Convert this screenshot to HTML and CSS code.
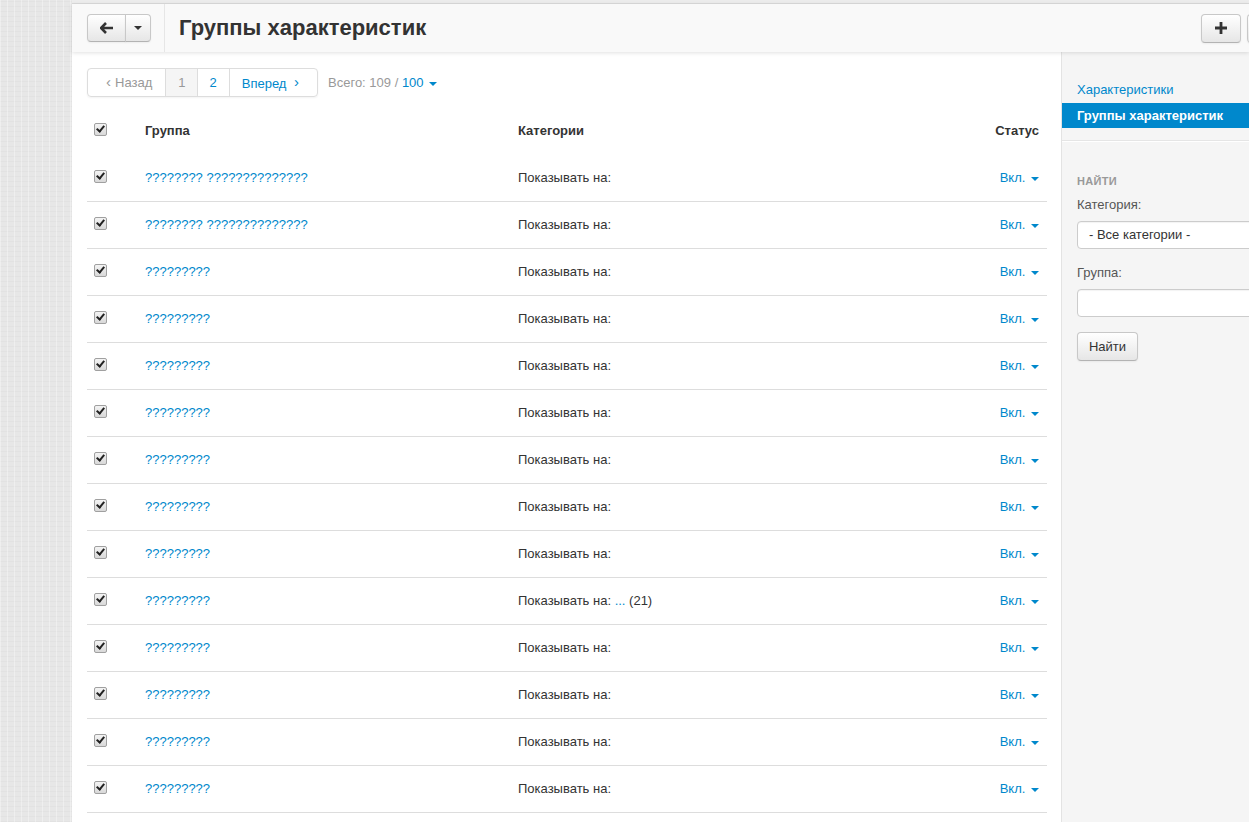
FILE: index.html
```html
<!DOCTYPE html>
<html>
	<head>
		<meta charset="utf-8">
		<title>Группы характеристик</title>
		<link rel="stylesheet" href="styles.css">
	</head>
	<body>
		<div class="desk"></div>
		<div class="page">
			<div class="tabs"></div>
			<div class="header">
				<div class="btn-group">
					<button class="btn btn-back"><svg width="14" height="12" viewBox="0 0 14 12"><path d="M6 1 L1 6 L6 11 M1.5 6 H13" fill="none" stroke="#333" stroke-width="2.6" stroke-linejoin="miter"/></svg></button>
					<button class="btn btn-caret"><span class="caret dark"></span></button>
				</div>
				<div class="sep"></div>
				<h1>Группы характеристик</h1>
				<div class="header-right">
					<button class="btn btn-add"><svg width="12" height="12" viewBox="0 0 12 12"><path d="M6 0 V12 M0 6 H12" stroke="#333" stroke-width="2.8"/></svg></button>
					<button class="btn btn-more"></button>
				</div>
			</div>
			<div class="body">
				<div class="content">
					<div class="toolbar">
						<ul class="pager">
							<li class="disabled"><span class="chev">&lsaquo;</span> Назад</li>
							<li class="active">1</li>
							<li><a href="#">2</a></li>
							<li><a href="#">Вперед <span class="chev">&rsaquo;</span></a></li>
						</ul>
						<div class="total">Всего: 109 / <a href="#">100 <span class="caret"></span></a></div>
					</div>
					<table class="list">
						<thead>
							<tr>
								<th class="c-check"><span class="cb"></span></th>
								<th class="c-name">Группа</th>
								<th class="c-cat">Категории</th>
								<th class="c-status">Статус</th>
							</tr>
						</thead>
						<tbody>
							<tr><td class="c-check"><span class="cb"></span></td><td><a href="#">???????? ??????????????</a></td><td>Показывать на:</td><td class="c-status"><a href="#">Вкл. <span class="caret"></span></a></td></tr>
							<tr><td class="c-check"><span class="cb"></span></td><td><a href="#">???????? ??????????????</a></td><td>Показывать на:</td><td class="c-status"><a href="#">Вкл. <span class="caret"></span></a></td></tr>
							<tr><td class="c-check"><span class="cb"></span></td><td><a href="#">?????????</a></td><td>Показывать на:</td><td class="c-status"><a href="#">Вкл. <span class="caret"></span></a></td></tr>
							<tr><td class="c-check"><span class="cb"></span></td><td><a href="#">?????????</a></td><td>Показывать на:</td><td class="c-status"><a href="#">Вкл. <span class="caret"></span></a></td></tr>
							<tr><td class="c-check"><span class="cb"></span></td><td><a href="#">?????????</a></td><td>Показывать на:</td><td class="c-status"><a href="#">Вкл. <span class="caret"></span></a></td></tr>
							<tr><td class="c-check"><span class="cb"></span></td><td><a href="#">?????????</a></td><td>Показывать на:</td><td class="c-status"><a href="#">Вкл. <span class="caret"></span></a></td></tr>
							<tr><td class="c-check"><span class="cb"></span></td><td><a href="#">?????????</a></td><td>Показывать на:</td><td class="c-status"><a href="#">Вкл. <span class="caret"></span></a></td></tr>
							<tr><td class="c-check"><span class="cb"></span></td><td><a href="#">?????????</a></td><td>Показывать на:</td><td class="c-status"><a href="#">Вкл. <span class="caret"></span></a></td></tr>
							<tr><td class="c-check"><span class="cb"></span></td><td><a href="#">?????????</a></td><td>Показывать на:</td><td class="c-status"><a href="#">Вкл. <span class="caret"></span></a></td></tr>
							<tr><td class="c-check"><span class="cb"></span></td><td><a href="#">?????????</a></td><td>Показывать на: <a href="#">...</a> (21)</td><td class="c-status"><a href="#">Вкл. <span class="caret"></span></a></td></tr>
							<tr><td class="c-check"><span class="cb"></span></td><td><a href="#">?????????</a></td><td>Показывать на:</td><td class="c-status"><a href="#">Вкл. <span class="caret"></span></a></td></tr>
							<tr><td class="c-check"><span class="cb"></span></td><td><a href="#">?????????</a></td><td>Показывать на:</td><td class="c-status"><a href="#">Вкл. <span class="caret"></span></a></td></tr>
							<tr><td class="c-check"><span class="cb"></span></td><td><a href="#">?????????</a></td><td>Показывать на:</td><td class="c-status"><a href="#">Вкл. <span class="caret"></span></a></td></tr>
							<tr><td class="c-check"><span class="cb"></span></td><td><a href="#">?????????</a></td><td>Показывать на:</td><td class="c-status"><a href="#">Вкл. <span class="caret"></span></a></td></tr>
						</tbody>
					</table>
				</div>
				<div class="sidebar">
					<ul class="nav">
						<li><a href="#">Характеристики</a></li>
						<li class="active"><a href="#">Группы характеристик</a></li>
					</ul>
					<div class="divider"></div>
					<div class="search">
						<div class="search-title">Найти</div>
						<label>Категория:</label>
						<div class="select">- Все категории -</div>
						<label>Группа:</label>
						<div class="input"></div>
						<button class="btn btn-find">Найти</button>
					</div>
				</div>
			</div>
		</div>
	</body>
</html>
```

FILE: styles.css
```css
html, body {
	margin: 0;
	height: 100%;
}
body {
	font-family: "Liberation Sans", Arial, sans-serif;
	font-size: 13px;
	color: #333;
	display: flex;
	overflow: hidden;
	background: #e8e8e8;
}
a {
	color: #0088cc;
	text-decoration: none;
}
.desk {
	width: 72px;
	flex: none;
	background-color: #e7e7e7;
	background-image:
		repeating-linear-gradient(90deg, rgba(255,255,255,.35) 0 1px, transparent 1px 7px),
		repeating-linear-gradient(0deg, rgba(0,0,0,.025) 0 1px, transparent 1px 5px);
}
.page {
	flex: 1;
	background: #fff;
	min-width: 0;
	display: flex;
	flex-direction: column;
}
.tabs {
	height: 3px;
	background: #ececec;
	border-bottom: 1px solid #dadada;
}
.header {
	height: 48px;
	flex: none;
	display: flex;
	align-items: center;
	padding-left: 15px;
	background: #f9f9f9;
	box-shadow: 0 1px 4px rgba(0,0,0,.12);
	position: relative;
	z-index: 1;
}
.btn {
	font-family: inherit;
	font-size: 13px;
	color: #333;
	height: 28px;
	border: 1px solid #c8c8c8;
	border-bottom-color: #b3b3b3;
	border-radius: 4px;
	background: linear-gradient(#ffffff, #e6e6e6);
	box-shadow: inset 0 1px 0 rgba(255,255,255,.2), 0 1px 2px rgba(0,0,0,.05);
	padding: 0;
	display: inline-flex;
	align-items: center;
	justify-content: center;
}
.btn-group {
	display: flex;
}
.btn-back {
	width: 39px;
	border-radius: 4px 0 0 4px;
}
.btn-caret {
	width: 26px;
	margin-left: -1px;
	border-radius: 0 4px 4px 0;
}
.caret {
	display: inline-block;
	width: 0;
	height: 0;
	border-top: 4px solid #0088cc;
	border-left: 4px solid transparent;
	border-right: 4px solid transparent;
	vertical-align: middle;
	margin-left: 2px;
}
.caret.dark {
	border-top-color: #333;
	margin: 0;
}
.sep {
	width: 1px;
	align-self: stretch;
	background: #e6e6e6;
	margin: 0 14px 0 13px;
}
h1 {
	margin: 0;
	font-size: 22px;
	font-weight: bold;
	color: #333;
	flex: 1;
}
.header-right {
	display: flex;
	gap: 6px;
	margin-right: -36px;
}
.btn-add {
	width: 40px;
	height: 29px;
}
.btn-more {
	width: 38px;
	height: 29px;
}
.body {
	flex: 1;
	display: flex;
	min-height: 0;
}
.content {
	width: 960px;
	flex: none;
	padding: 16px 14px 0 15px;
}
.sidebar {
	flex: 1;
	background: #f5f5f5;
	border-left: 1px solid #e3e3e3;
	overflow: hidden;
	padding-top: 25px;
}
.toolbar {
	display: flex;
	align-items: center;
	gap: 10px;
	height: 29px;
}
.pager {
	list-style: none;
	margin: 0;
	padding: 0;
	display: flex;
	border: 1px solid #ddd;
	border-radius: 4px;
	box-shadow: 0 1px 2px rgba(0,0,0,.05);
	height: 27px;
}
.pager li {
	display: flex;
	align-items: center;
	padding: 0 12px;
	border-left: 1px solid #ddd;
	color: #999;
}
.pager li:first-child {
	border-left: 0;
	padding: 0 13px 0 14px;
}
.pager li.active {
	background: #f5f5f5;
	padding: 0 12px 0 12px;
}
.pager li:nth-child(3) {
	padding: 0 12px 0 11px;
}
.pager li:last-child {
	padding: 0 14px 0 12px;
}
.chev {
	font-size: 15px;
	margin: 0 4px;
	position: relative;
	top: -1px;
}
.total {
	color: #999;
}
.list {
	width: 960px;
	border-collapse: collapse;
	margin-top: 9px;
}
.list th {
	text-align: left;
	font-weight: bold;
	height: 48px;
	padding: 0;
	vertical-align: middle;
}
.list td {
	height: 45px;
	padding: 0 0 1px;
	border-bottom: 1px solid #dddddd;
	vertical-align: middle;
}
.list tbody tr:first-child td {
	padding: 1px 0 1px;
}
.list .c-check {
	width: 51px;
	padding-left: 7px;
}
.list .c-name {
	width: 373px;
}
.list td:nth-child(2) {
	width: 373px;
}
.list .c-status {
	text-align: right;
	padding-right: 8px;
}
.list tbody tr:first-child .c-check {
	padding-left: 7px;
}
.list tbody tr:first-child .c-status {
	padding-right: 8px;
}
.cb {
	display: inline-block;
	width: 11px;
	height: 11px;
	border: 1px solid #a0a0a0;
	border-radius: 2px;
	background: linear-gradient(#f4f4f4, #d8d8d8);
	position: relative;
	vertical-align: middle;
	top: -2px;
}
.cb::after {
	content: "";
	position: absolute;
	left: 3px;
	top: 0px;
	width: 3px;
	height: 6px;
	border: solid #222;
	border-width: 0 2px 2px 0;
	transform: rotate(40deg);
}
.nav {
	list-style: none;
	margin: 0;
	padding: 0;
}
.nav li a {
	display: block;
	height: 25px;
	line-height: 25px;
	padding: 0 15px;
	white-space: nowrap;
}
.nav li.active a {
	background: #0088cc;
	color: #fff;
	font-weight: bold;
	margin-top: 1px;
}
.divider {
	height: 1px;
	background: #e5e5e5;
	border-bottom: 1px solid #fff;
	margin: 12px 0 0;
}
.search {
	padding: 33px 15px 0;
}
.search-title {
	font-size: 11px;
	font-weight: bold;
	color: #999;
	text-transform: uppercase;
	letter-spacing: .3px;
	margin-bottom: 10px;
}
label {
	display: block;
	color: #555;
	margin-bottom: 9px;
}
.select, .input {
	width: 220px;
	height: 26px;
	line-height: 26px;
	border: 1px solid #ccc;
	border-radius: 4px;
	background: #fff;
	padding: 0 11px;
	box-shadow: inset 0 1px 1px rgba(0,0,0,.05);
	margin-bottom: 16px;
	white-space: nowrap;
}
.select {
	color: #333;
}
.input {
	margin-bottom: 15px;
}
.btn-find {
	width: 61px;
	height: 29px;
}
```
